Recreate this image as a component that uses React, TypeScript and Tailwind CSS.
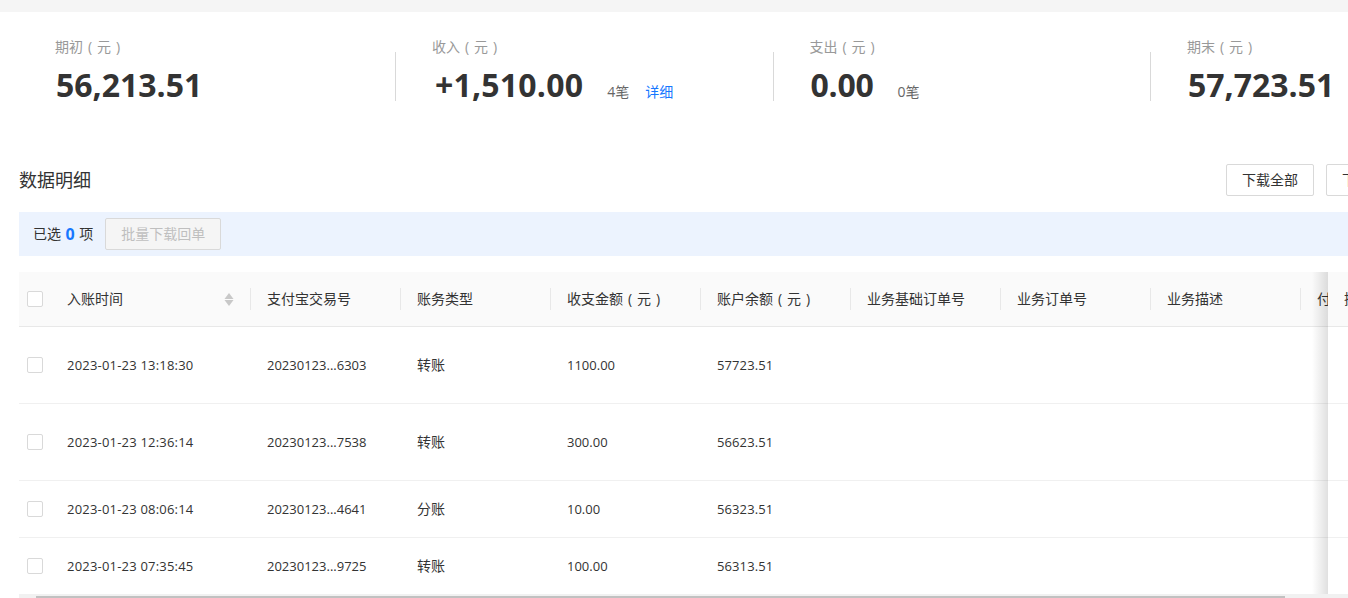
const font = { fontFamily: '"Open Sans", "Noto Sans CJK SC", sans-serif' };

const stats = [
  { label: '期初 ( 元 )', value: '56,213.51', valueClass: 'ml-px' },
  { label: '收入 ( 元 )', value: '+1,510.00', count: '4笔', link: '详细', valueClass: 'ml-[3px] tracking-[0.2px]' },
  { label: '支出 ( 元 )', value: '0.00', count: '0笔', valueClass: 'ml-px -tracking-[0.25px]' },
  { label: '期末 ( 元 )', value: '57,723.51', valueClass: 'ml-px' },
];

const cols = ['支付宝交易号', '账务类型', '收支金额 ( 元 )', '账户余额 ( 元 )', '业务基础订单号', '业务订单号', '业务描述', '付款备注'];

const rows = [
  { time: '2023-01-23 13:18:30', no: '20230123...6303', type: '转账', amount: '1100.00', balance: '57723.51', h: 'h-[77px]' },
  { time: '2023-01-23 12:36:14', no: '20230123...7538', type: '转账', amount: '300.00', balance: '56623.51', h: 'h-[77px]' },
  { time: '2023-01-23 08:06:14', no: '20230123...4641', type: '分账', amount: '10.00', balance: '56323.51', h: 'h-[57px]' },
  { time: '2023-01-23 07:35:45', no: '20230123...9725', type: '转账', amount: '100.00', balance: '56313.51', h: 'h-[57px]' },
];

function Box() {
  return <span className="block w-4 h-4 rounded-[2px] border border-[#d9d9d9] bg-white" />;
}

function Stat({ s, first }: { s: (typeof stats)[number]; first: boolean }) {
  return (
    <div className={`w-[377.5px] shrink-0 h-[49px] ${first ? '' : 'border-l border-[#d9d9d9]'}`}>
      <div className={`-mt-[14px] ${first ? 'pl-[37.5px]' : 'pl-9'}`}>
        <div className="text-[14px] leading-[18px] text-[#999] [word-spacing:1.3px]">{s.label}</div>
        <div className="flex items-baseline mt-[7px]">
          <span className={`text-[32px] leading-[44px] font-bold text-[#333] ${s.valueClass}`}>{s.value}</span>
          {s.count && <span className="text-[14px] text-[#666] ml-6">{s.count}</span>}
          {s.link && <span className="text-[14px] text-[#1677ff] ml-4">{s.link}</span>}
        </div>
      </div>
    </div>
  );
}

export default function App() {
  return (
    <div className="w-[1348px] h-[598px] overflow-hidden bg-white relative" style={font}>
      <div className="h-3 bg-[#f5f5f5]" />
      <div className="flex pl-[17.5px] pt-[40px] w-[1600px]">
        {stats.map((s, i) => (
          <Stat key={s.label} s={s} first={i === 0} />
        ))}
      </div>

      <div className="pl-[19px] w-[1348px]">
        <div className="flex items-center justify-between h-[32px] mt-[63px]">
          <h2 className="text-[18px] leading-[32px] font-normal text-[#333]">数据明细</h2>
          <div className="flex gap-3 -mr-[66px] shrink-0">
            <button className="w-[88px] h-[32px] pb-[2px] border border-[#d9d9d9] rounded-[2px] text-[14px] text-[#333] bg-white">下载全部</button>
            <button className="w-[88px] h-[32px] pb-[2px] border border-[#d9d9d9] rounded-[2px] text-[14px] text-[#333] bg-white">下载查询</button>
          </div>
        </div>

        <div className="flex items-center h-[44px] mt-[16px] bg-[#ecf3fe] pl-[14px]">
          <span className="text-[14px] text-[#333] pb-[2px]">已选</span>
          <span className="text-[16px] font-bold text-[#1677ff] mx-[4.5px]">0</span>
          <span className="text-[14px] text-[#333] pb-[2px]">项</span>
          <button disabled className="ml-3 w-[116px] h-[32px] pb-[2px] border border-[#d9d9d9] rounded-[2px] bg-[#f5f5f5] text-[14px] text-[#bfbfbf]">批量下载回单</button>
        </div>

        <div className="relative mt-4 h-[326px] overflow-hidden">
          <div className="flex items-center h-[55px] bg-[#fafafa] border-b border-[#e8e8e8] w-[1400px]">
            <div className="w-8 shrink-0 pl-2"><Box /></div>
            <div className="w-[200px] shrink-0 h-[22px] flex items-center justify-between pl-4 pr-[16px] border-r border-[#e8e8e8] text-[14px] text-[#333]">
              <span className="pb-[2px]">入账时间</span>
              <span className="flex flex-col gap-[1px]">
                <svg width="10" height="6" viewBox="0 0 10 6"><path d="M5 0l4.5 6h-9z" fill="#c8c8c8" /></svg>
                <svg width="10" height="6" viewBox="0 0 10 6"><path d="M5 6L.5 0h9z" fill="#c8c8c8" /></svg>
              </span>
            </div>
            {cols.map((c) => (
              <div key={c} className="w-[150px] shrink-0 h-[22px] flex items-center pl-4 pb-[2px] border-r border-[#e8e8e8] text-[14px] text-[#333] whitespace-nowrap [word-spacing:1.3px]">{c}</div>
            ))}
          </div>
          {rows.map((r) => (
            <div key={r.time} className={`flex items-center ${r.h} border-b border-[#f0f0f0] w-[1400px] text-[13px] text-[#333]`}>
              <div className="w-8 shrink-0 pl-2"><Box /></div>
              <div className="w-[200px] shrink-0 pl-4 pt-px tracking-[0.2px]">{r.time}</div>
              <div className="w-[150px] shrink-0 pl-4 pt-px">{r.no}</div>
              <div className="w-[150px] shrink-0 pl-4 pb-[2px] text-[14px]">{r.type}</div>
              <div className="w-[150px] shrink-0 pl-4 pt-px">{r.amount}</div>
              <div className="w-[150px] shrink-0 pl-4 pt-px tracking-[0.1px]">{r.balance}</div>
            </div>
          ))}

          <div className="absolute top-0 bottom-[3px] left-[1293px] w-4 bg-gradient-to-r from-transparent to-[#0000001f]" />
          <div className="absolute top-0 bottom-[3px] left-[1309px] w-[60px] bg-white">
            <div className="flex items-center h-[55px] pb-[2px] bg-[#fafafa] border-b border-[#e8e8e8] pl-4 text-[14px] text-[#333] whitespace-nowrap">操作</div>
            <div className="h-[77px] border-b border-[#f0f0f0]" />
            <div className="h-[77px] border-b border-[#f0f0f0]" />
            <div className="h-[57px] border-b border-[#f0f0f0]" />
            <div className="h-[57px] border-b border-[#f0f0f0]" />
          </div>

          <div className="absolute left-0 right-0 bottom-0 h-[4px] bg-[#f1f1f1]">
            <div className="absolute left-[17px] top-[2px] bottom-0 w-[1249px] bg-[#c1c1c1]" />
          </div>
        </div>
      </div>
    </div>
  );
}
